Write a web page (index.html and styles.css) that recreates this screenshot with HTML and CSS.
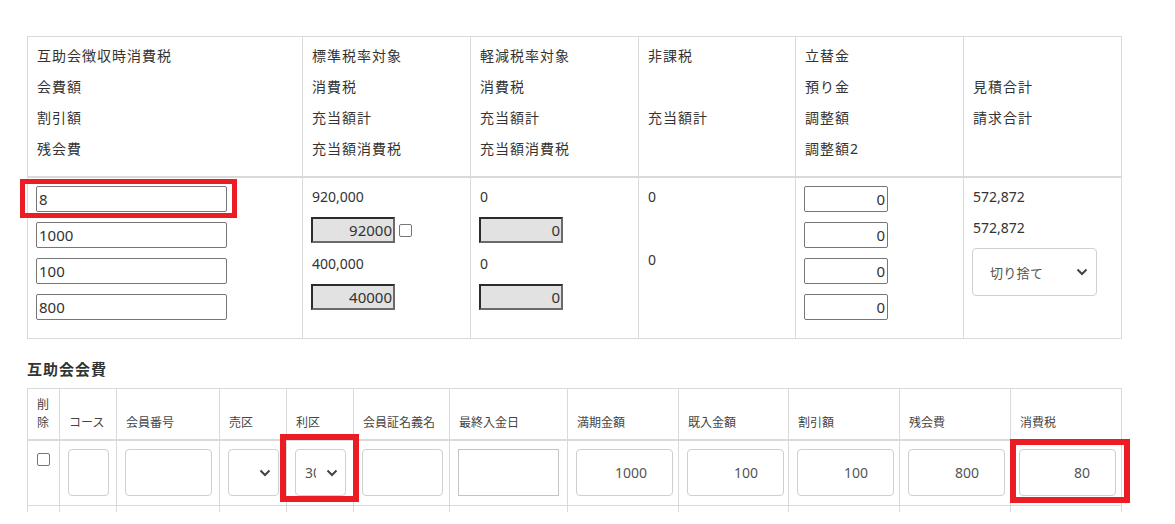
FILE: index.html
```html
<!DOCTYPE html>
<html lang="ja">
<head>
<meta charset="utf-8">
<title>互助会会費</title>
<link rel="stylesheet" href="styles.css">
</head>
<body>
<div class="page">
  <table class="summary">
    <colgroup>
      <col class="c1"><col class="c2"><col class="c3"><col class="c4"><col class="c5"><col class="c6">
    </colgroup>
    <thead>
      <tr>
        <th>
          <div class="lbl">互助会徴収時消費税</div>
          <div class="lbl">会費額</div>
          <div class="lbl">割引額</div>
          <div class="lbl">残会費</div>
        </th>
        <th>
          <div class="lbl">標準税率対象</div>
          <div class="lbl">消費税</div>
          <div class="lbl">充当額計</div>
          <div class="lbl">充当額消費税</div>
        </th>
        <th>
          <div class="lbl">軽減税率対象</div>
          <div class="lbl">消費税</div>
          <div class="lbl">充当額計</div>
          <div class="lbl">充当額消費税</div>
        </th>
        <th>
          <div class="lbl">非課税</div>
          <div class="lbl blank"></div>
          <div class="lbl">充当額計</div>
          <div class="lbl blank"></div>
        </th>
        <th>
          <div class="lbl">立替金</div>
          <div class="lbl">預り金</div>
          <div class="lbl">調整額</div>
          <div class="lbl">調整額2</div>
        </th>
        <th>
          <div class="lbl blank"></div>
          <div class="lbl">見積合計</div>
          <div class="lbl">請求合計</div>
          <div class="lbl blank"></div>
        </th>
      </tr>
    </thead>
    <tbody>
      <tr>
        <td>
          <input class="box wide" value="8">
          <input class="box wide" value="1000">
          <input class="box wide" value="100">
          <input class="box wide" value="800">
        </td>
        <td>
          <div class="val">920,000</div>
          <div class="ro-line"><input class="ro" value="92000" readonly><input type="checkbox" class="chk small"></div>
          <div class="val">400,000</div>
          <div class="ro-line"><input class="ro" value="40000" readonly></div>
        </td>
        <td>
          <div class="val">0</div>
          <div class="ro-line"><input class="ro" value="0" readonly></div>
          <div class="val">0</div>
          <div class="ro-line"><input class="ro" value="0" readonly></div>
        </td>
        <td>
          <div class="val">0</div>
          <div class="val gap-big">0</div>
        </td>
        <td>
          <input class="box num" value="0">
          <input class="box num" value="0">
          <input class="box num" value="0">
          <input class="box num" value="0">
        </td>
        <td>
          <div class="val">572,872</div>
          <div class="val">572,872</div>
          <div class="select round-sel">
            <span class="sel-text">切り捨て</span>
            <svg class="chev" width="12" height="8" viewBox="0 0 12 8"><path d="M1.5 1.5 L6 6 L10.5 1.5" fill="none" stroke="#444" stroke-width="2"/></svg>
          </div>
        </td>
      </tr>
    </tbody>
  </table>

  <h2 class="section-title">互助会会費</h2>

  <table class="fees">
    <colgroup>
      <col class="f1"><col class="f2"><col class="f3"><col class="f4"><col class="f5"><col class="f6">
      <col class="f7"><col class="f8"><col class="f9"><col class="f10"><col class="f11"><col class="f12">
    </colgroup>
    <thead>
      <tr>
        <th>削<br>除</th>
        <th>コース</th>
        <th>会員番号</th>
        <th>売区</th>
        <th>利区</th>
        <th>会員証名義名</th>
        <th>最終入金日</th>
        <th>満期金額</th>
        <th>既入金額</th>
        <th>割引額</th>
        <th>残会費</th>
        <th>消費税</th>
      </tr>
    </thead>
    <tbody>
      <tr>
        <td><input type="checkbox" class="chk"></td>
        <td><input class="tbox w-course"></td>
        <td><input class="tbox w-member"></td>
        <td>
          <div class="select tsel">
            <span class="sel-text"></span>
            <svg class="chev" width="12" height="8" viewBox="0 0 12 8"><path d="M1.5 1.5 L6 6 L10.5 1.5" fill="none" stroke="#444" stroke-width="2"/></svg>
          </div>
        </td>
        <td>
          <div class="select tsel">
            <span class="sel-text clip">30</span>
            <svg class="chev" width="12" height="8" viewBox="0 0 12 8"><path d="M1.5 1.5 L6 6 L10.5 1.5" fill="none" stroke="#444" stroke-width="2"/></svg>
          </div>
        </td>
        <td><input class="tbox w-name"></td>
        <td><input class="tbox w-date"></td>
        <td><input class="tbox amt" value="1000"></td>
        <td><input class="tbox amt" value="100"></td>
        <td><input class="tbox amt" value="100"></td>
        <td><input class="tbox amt" value="800"></td>
        <td><input class="tbox amt" value="80"></td>
      </tr>
      <tr class="stub">
        <td></td><td></td><td></td><td></td><td></td><td></td>
        <td></td><td></td><td></td><td></td><td></td><td></td>
      </tr>
    </tbody>
  </table>

  <div class="mark mark-1"></div>
  <div class="mark mark-2"></div>
  <div class="mark mark-3"></div>
</div>
</body>
</html>
```

FILE: styles.css
```css
* { box-sizing: border-box; }

html, body {
  margin: 0;
  padding: 0;
  background: #fff;
}

body {
  font-family: "Noto Sans", "Noto Sans CJK JP", sans-serif;
  font-size: 14px;
  color: #333;
}

.page {
  position: relative;
  padding: 36px 0 0 27px;
  width: 1175px;
  height: 524px;
  overflow: hidden;
}

table {
  border-collapse: collapse;
  table-layout: fixed;
  width: 1094px;
}

/* ---------- summary table ---------- */
.summary .c1 { width: 275px; }
.summary .c2 { width: 168px; }
.summary .c3 { width: 168px; }
.summary .c4 { width: 157px; }
.summary .c5 { width: 168px; }
.summary .c6 { width: 158px; }

.summary th,
.summary td {
  border: 1px solid #dadada;
  vertical-align: top;
  text-align: left;
  font-weight: normal;
}

.summary th {
  padding: 8px 9px 7px 9px;
  border-bottom: 2px solid #dadada;
}

.summary td {
  padding: 8px 9px 18px 8px;
}

.lbl {
  height: 21px;
  line-height: 21px;
  margin-bottom: 10px;
  letter-spacing: 1px;
  white-space: nowrap;
}

.val {
  height: 21px;
  line-height: 21px;
  margin-bottom: 10px;
  padding-left: 1px;
}

.val.gap-big { margin-top: 42px; }

.box {
  display: block;
  height: 26px;
  margin: 0 0 10px 0;
  padding: 0 2px;
  border: 1px solid #767676;
  border-radius: 2px;
  font-family: "Noto Sans", sans-serif;
  font-size: 15px;
  color: #333;
  background: #fff;
  outline: none;
}

.box:last-child,
.ro-line:last-child,
.val:last-child { margin-bottom: 0; }

.box.wide { width: 191px; }
.box.num { width: 84px; text-align: right; }

.ro-line {
  display: flex;
  align-items: center;
  height: 26px;
  margin-bottom: 10px;
}

.ro {
  width: 84px;
  height: 26px;
  padding: 0 1px;
  border-style: solid;
  border-width: 2px;
  border-color: #2b2b2b #6a6a6a #6a6a6a #2b2b2b;
  background: #e2e2e2;
  font-family: "Noto Sans", sans-serif;
  font-size: 15px;
  color: #333;
  text-align: right;
  outline: none;
}

.chk {
  appearance: none;
  -webkit-appearance: none;
  width: 13px;
  height: 13px;
  margin: 0;
  border: 1px solid #767676;
  border-radius: 2px;
  background: #fff;
}

.chk.small { margin-left: 4px; }

.select {
  display: flex;
  align-items: center;
  justify-content: space-between;
  background: #fff;
  border: 1px solid #d0d0d0;
  border-radius: 4px;
}

.round-sel {
  width: 125px;
  height: 48px;
  padding: 0 8px 0 17px;
  font-size: 13px;
  color: #555;
  letter-spacing: 0.3px;
}

.chev { display: block; flex: none; }

/* ---------- section title ---------- */
.section-title {
  margin: 20px 0 8px 0;
  font-size: 15px;
  font-weight: bold;
  line-height: 21px;
  letter-spacing: 1px;
  color: #333;
}

/* ---------- fees table ---------- */
.fees .f1 { width: 32px; }
.fees .f2 { width: 57px; }
.fees .f3 { width: 103px; }
.fees .f4 { width: 67px; }
.fees .f5 { width: 67px; }
.fees .f6 { width: 96px; }
.fees .f7 { width: 118px; }
.fees .f8 { width: 111px; }
.fees .f9 { width: 110px; }
.fees .f10 { width: 111px; }
.fees .f11 { width: 111px; }
.fees .f12 { width: 111px; }

.fees th,
.fees td {
  border: 1px solid #dadada;
  text-align: left;
}

.fees th {
  padding: 7px 4px 8px 9px;
  vertical-align: bottom;
  font-size: 12px;
  font-weight: normal;
  line-height: 17.6px;
  color: #444;
  border-bottom: 2px solid #dadada;
  white-space: nowrap;
}

.fees td {
  padding: 8px 4px 8px 8px;
  vertical-align: top;
  height: 65px;
}

.fees td .chk { margin: 4px 0 0 1px; display: block; }

.tbox {
  display: block;
  height: 47px;
  padding: 0 10px;
  border: 1px solid #cfcfcf;
  border-radius: 4px;
  font-family: "Noto Sans", sans-serif;
  font-size: 14px;
  color: #555;
  background: #fff;
  outline: none;
}

.w-course { width: 41px; }
.w-member { width: 87px; }
.w-name { width: 81px; }
.w-date { width: 101px; border-radius: 0; border-color: #c4c4c4; }
.tbox.amt { width: 97px; text-align: right; padding-right: 25px; }

.tsel {
  width: 51px;
  height: 47px;
  padding: 0 7px 0 9px;
  font-size: 14px;
  color: #555;
}

.sel-text.clip {
  display: block;
  width: 11px;
  overflow: hidden;
  white-space: nowrap;
}

.fees .stub td {
  height: 7px;
  padding: 0;
  border-bottom: none;
}

/* ---------- annotation marks ---------- */
.mark {
  position: absolute;
  border: 6px solid #ec1c24;
}

.mark-1 { left: 20px; top: 179px; width: 217px; height: 39px; border-width: 5px; }
.mark-2 { left: 280px; top: 434px; width: 79px; height: 68px; }
.mark-3 { left: 1010px; top: 439px; width: 120px; height: 64px; }
```
